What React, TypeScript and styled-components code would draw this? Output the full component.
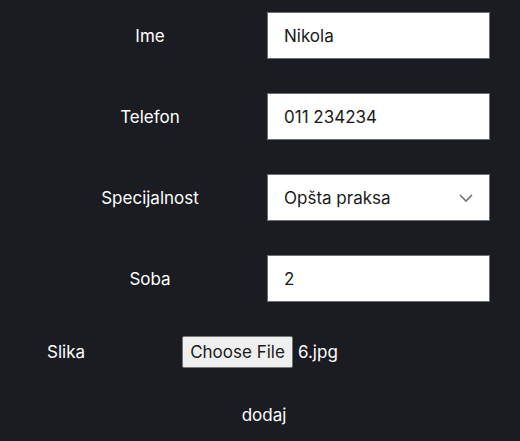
import styled, { createGlobalStyle } from 'styled-components';

const GlobalStyle = createGlobalStyle`
  html, body {
    margin: 0;
    background: #1b1c22;
    font-family: Inter, "Noto Sans", sans-serif;
  }
`

const fields = [
    { label: 'Ime', value: 'Nikola' },
    { label: 'Telefon', value: '011 234234' },
    { label: 'Specijalnost', value: 'Opšta praksa', select: true },
    { label: 'Soba', value: '2' },
]

const App = () => {
    return (
        <>
            <GlobalStyle />
            <Form>
                {fields.map(f => (
                    <Row key={f.label}>
                        <Label>{f.label}</Label>
                        <Field>
                            <span>{f.value}</span>
                            {f.select && (
                                <svg width="14" height="8" viewBox="0 0 14 8">
                                    <path d="M1 1l6 6 6-6" fill="none" stroke="#6e6e6e" strokeWidth="1.6" />
                                </svg>
                            )}
                        </Field>
                    </Row>
                ))}
                <FileRow>
                    <FileLabel>Slika</FileLabel>
                    <FileButton type="button">Choose File</FileButton>
                    <FileName>6.jpg</FileName>
                </FileRow>
                <Submit type="button">dodaj</Submit>
            </Form>
        </>
    );
}

export default App;

const Form = styled.form`
  display: flex;
  flex-direction: column;
  padding-top: 12px;
  color: #ffffff;
`

const Row = styled.div`
  display: grid;
  grid-template-columns: 234px 223px;
  padding-left: 33px;
  align-items: center;
  margin-bottom: 34px;
`

const Label = styled.label`
  text-align: center;
  font-size: 17px;
  font-weight: 400;
`

const Field = styled.div`
  box-sizing: border-box;
  height: 47px;
  display: flex;
  align-items: center;
  justify-content: space-between;
  padding: 0 16px;
  background: #ffffff;
  border: 1px solid #6b6e75;
  color: #1a1a1a;
  font-size: 17px;
`

const FileRow = styled.div`
  display: flex;
  align-items: center;
  padding-left: 47px;
`

const FileLabel = styled.span`
  width: 135px;
  font-size: 17px;
`

const FileButton = styled.button`
  box-sizing: border-box;
  width: 111px;
  height: 32px;
  padding: 0;
  background: #efefef;
  border: 1px solid #767676;
  border-radius: 2px;
  font-family: inherit;
  font-size: 17px;
  color: #1a1a1a;
`

const FileName = styled.span`
  margin-left: 5px;
  font-size: 17px;
`

const Submit = styled.button`
  align-self: center;
  margin-top: 36px;
  margin-left: 8px;
  padding: 0;
  background: none;
  border: none;
  color: #ffffff;
  font-family: inherit;
  font-size: 17px;
  line-height: 22px;
`
